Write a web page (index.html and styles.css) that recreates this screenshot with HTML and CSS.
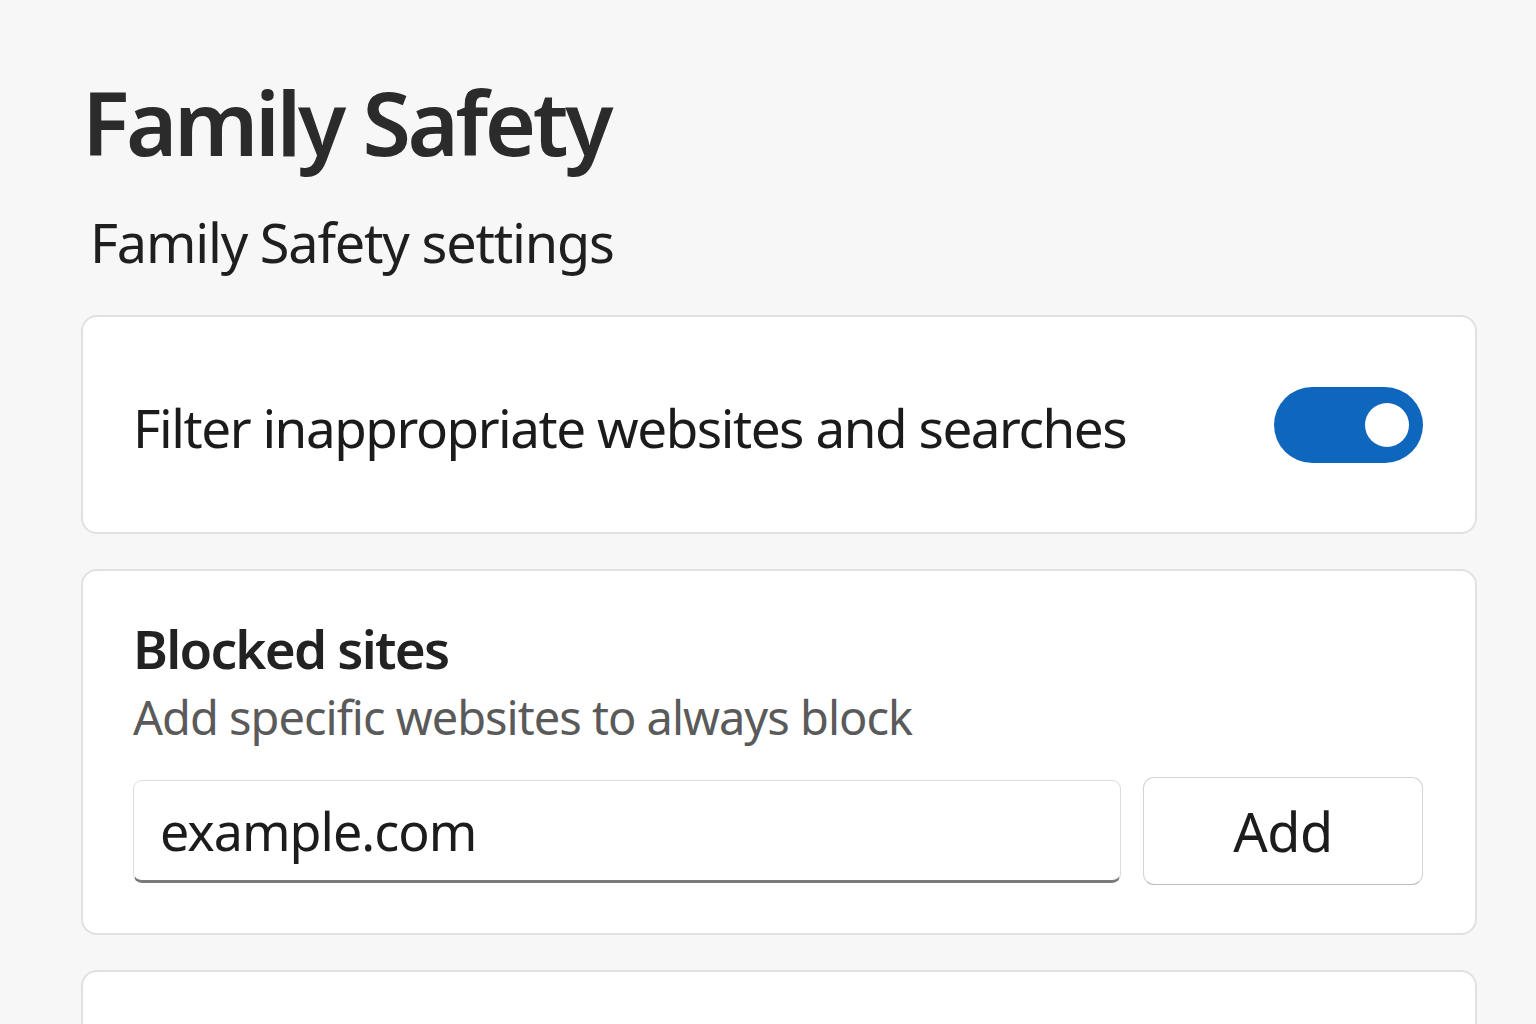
FILE: index.html
```html
<!DOCTYPE html>
<html lang="en">
<head>
    <meta charset="UTF-8">
    <meta name="viewport" content="width=device-width, initial-scale=1.0">
    <title>Family Safety</title>
    <link rel="stylesheet" href="styles.css">
</head>
<body>
    <main class="page">
        <h1 class="page-title">Family Safety</h1>
        <h2 class="section-title">Family Safety settings</h2>

        <section class="card card-row">
            <span class="row-label">Filter inappropriate websites and searches</span>
            <span class="toggle on"><span class="knob"></span></span>
        </section>

        <section class="card card-blocked">
            <h3 class="card-title">Blocked sites</h3>
            <p class="card-desc">Add specific websites to always block</p>
            <div class="add-row">
                <input class="site-input" type="text" value="example.com">
                <button class="add-btn">Add</button>
            </div>
        </section>

        <section class="card card-next"></section>
    </main>
</body>
</html>
```

FILE: styles.css
```css
body {
    margin: 0;
    background-color: #f7f7f7;
    font-family: "Noto Sans", "Open Sans", sans-serif;
    color: #1c1c1c;
    overflow: hidden;
}

.page {
    padding: 62px 59px 0 81px;
}

.page-title {
    margin: 0 0 0 1px;
    font-size: 88px;
    font-weight: 600;
    letter-spacing: -3.4px;
    line-height: 120px;
    color: #2b2b2b;
}

.section-title {
    margin: 24px 0 37px 9px;
    font-size: 54px;
    font-weight: 400;
    letter-spacing: -1.2px;
    line-height: 72px;
    color: #1f1f1f;
}

.card {
    background-color: #fff;
    border: 2px solid #e1e1e1;
    border-radius: 16px;
    margin-bottom: 35px;
}

/* Toggle row */
.card-row {
    height: 215px;
    display: flex;
    align-items: center;
    justify-content: space-between;
    padding: 0 52px 0 50px;
}

.row-label {
    font-size: 53px;
    letter-spacing: -1.45px;
    color: #1b1b1b;
    margin-top: 6px;
}

.toggle {
    width: 149px;
    height: 76px;
    border-radius: 38px;
    background-color: #0f67bd;
    display: flex;
    align-items: center;
    justify-content: flex-end;
    padding: 0 14px;
    box-sizing: border-box;
}

.knob {
    width: 44px;
    height: 44px;
    border-radius: 50%;
    background-color: #fff;
}

/* Blocked sites */
.card-blocked {
    padding: 42px 52px 48px 50px;
}

.card-title {
    margin: 0;
    font-size: 53px;
    font-weight: 600;
    letter-spacing: -1.75px;
    line-height: 72px;
    color: #222;
}

.card-desc {
    margin: 0 0 28px;
    font-size: 47px;
    letter-spacing: -1px;
    line-height: 64px;
    color: #5a5a5a;
}

.add-row {
    display: flex;
    align-items: center;
    gap: 22px;
}

.site-input {
    flex: 1;
    height: 103px;
    box-sizing: border-box;
    border: 1.5px solid #dcdcdc;
    border-bottom: 3px solid #7a7a7a;
    border-radius: 9px;
    padding: 0 26px;
    font-family: inherit;
    font-size: 52px;
    letter-spacing: -1px;
    color: #1c1c1c;
    background-color: #fff;
    outline: none;
}

.add-btn {
    width: 280px;
    height: 108px;
    border: 1.5px solid #d4d4d4;
    border-bottom-color: #bdbdbd;
    border-radius: 11px;
    background-color: #fff;
    font-family: inherit;
    font-size: 54px;
    letter-spacing: -0.5px;
    color: #1c1c1c;
    cursor: pointer;
}

.card-next {
    height: 120px;
}
```
